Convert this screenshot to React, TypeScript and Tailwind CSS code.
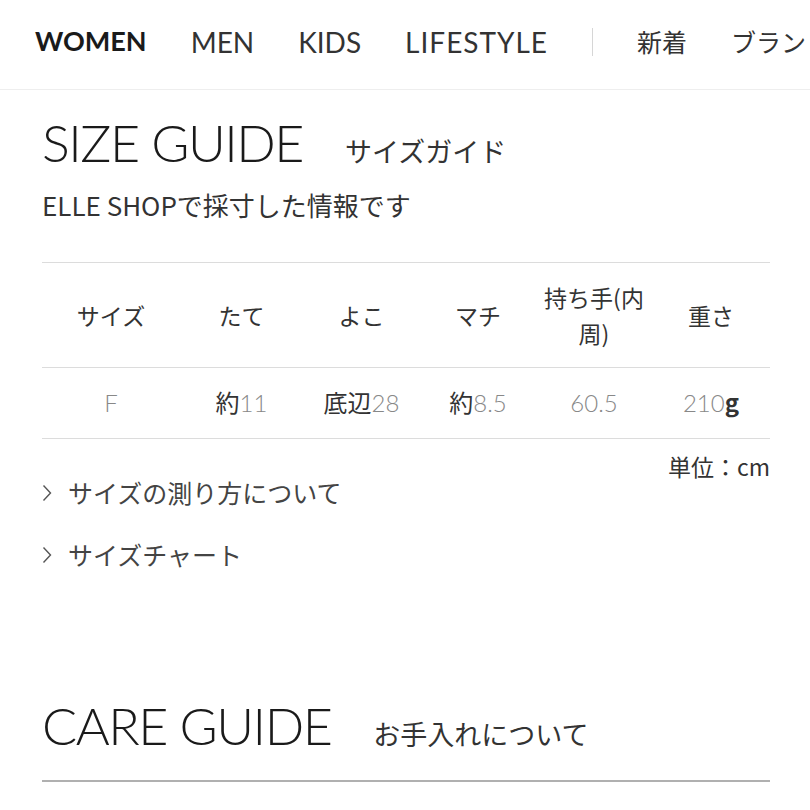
import React from "react";

function Chevron() {
  return (
    <svg width="10" height="18" viewBox="0 0 10 18" className="mr-[16px] shrink-0">
      <path d="M1.5 1.5 L8.5 9 L1.5 16.5" fill="none" stroke="#555" strokeWidth="1.4" />
    </svg>
  );
}

const cols = "grid grid-cols-[138px_123px_117px_116px_116px_118px] items-center border-b border-[#dcdcdc]";

export default function App() {
  const headers = ["サイズ", "たて", "よこ", "マチ", "持ち手(内周)", "重さ"];
  return (
    <div className="w-[810px] h-[810px] overflow-hidden bg-white text-[#333] font-['Noto_Sans_CJK_JP','Noto_Sans',sans-serif]">
      <nav className="h-[90px] border-b border-[#eeeeee] flex items-center gap-[44px] pl-[35px] pb-[6px] whitespace-nowrap font-['Lato','Noto_Sans_CJK_JP',sans-serif]">
        <span className="text-[27px] font-bold text-[#1a1a1a]">WOMEN</span>
        <span className="text-[28px]">MEN</span>
        <span className="text-[28px]">KIDS</span>
        <span className="text-[28px] tracking-[1px]">LIFESTYLE</span>
        <div className="w-px h-[28px] shrink-0 bg-[#d6d6d6]" />
        <span className="text-[25px] font-['Noto_Sans_CJK_JP',sans-serif]">新着</span>
        <span className="text-[25px] font-['Noto_Sans_CJK_JP',sans-serif]">ブランド</span>
      </nav>

      <main className="pl-[42px] pr-[40px]">
        <div className="flex items-baseline mt-[26px]">
          <h1 className="text-[52px] font-light leading-none tracking-[-1.5px] text-[#1a1a1a] font-['Lato',sans-serif]">
            SIZE GUIDE
          </h1>
          <span className="ml-[42px] text-[27px]">サイズガイド</span>
        </div>
        <p className="mt-[13px] text-[26px] leading-[40px]">ELLE SHOPで採寸した情報です</p>

        <div className="mt-[37px] border-t border-[#dcdcdc]">
          <div className={`${cols} h-[105px] text-[23px] leading-[36px]`}>
            {headers.map((h) => (
              <div key={h} className="text-center px-[5px]">{h}</div>
            ))}
          </div>
          <div className={`${cols} h-[71px] text-[24px]`}>
            <div className="text-center text-[#888] font-light font-['Lato',sans-serif]">F</div>
            <div className="text-center">
              約<span className="text-[#888] font-light font-['Lato',sans-serif]">11</span>
            </div>
            <div className="text-center">
              底辺<span className="text-[#888] font-light font-['Lato',sans-serif]">28</span>
            </div>
            <div className="text-center">
              約<span className="text-[#888] font-light font-['Lato',sans-serif]">8.5</span>
            </div>
            <div className="text-center text-[#888] font-light font-['Lato',sans-serif]">60.5</div>
            <div className="text-center">
              <span className="text-[#888] font-light font-['Lato',sans-serif]">210</span>
              <span className="font-bold">g</span>
            </div>
          </div>
        </div>

        <div className="flex justify-end mt-[14px] text-[23px] leading-[26px]">単位：cm</div>
        <div className="flex items-center h-[28px] text-[25px] text-[#444]">
          <Chevron />
          サイズの測り方について
        </div>
        <div className="flex items-center h-[28px] mt-[34px] text-[25px] text-[#444]">
          <Chevron />
          サイズチャート
        </div>

        <div className="flex items-baseline mt-[130px]">
          <h2 className="text-[52px] font-light leading-none tracking-[-1.5px] text-[#1a1a1a] font-['Lato',sans-serif]">
            CARE GUIDE
          </h2>
          <span className="ml-[42px] text-[27px]">お手入れについて</span>
        </div>
        <div className="mt-[26px] border-t-2 border-[#b0b0b0]" />
        <p className="mt-[24px] text-[22px] text-[#ccc] whitespace-nowrap">
          ご使用のアイテムは、素材の特性上、色落ち等が起こる場合がございます。
        </p>
      </main>
    </div>
  );
}
